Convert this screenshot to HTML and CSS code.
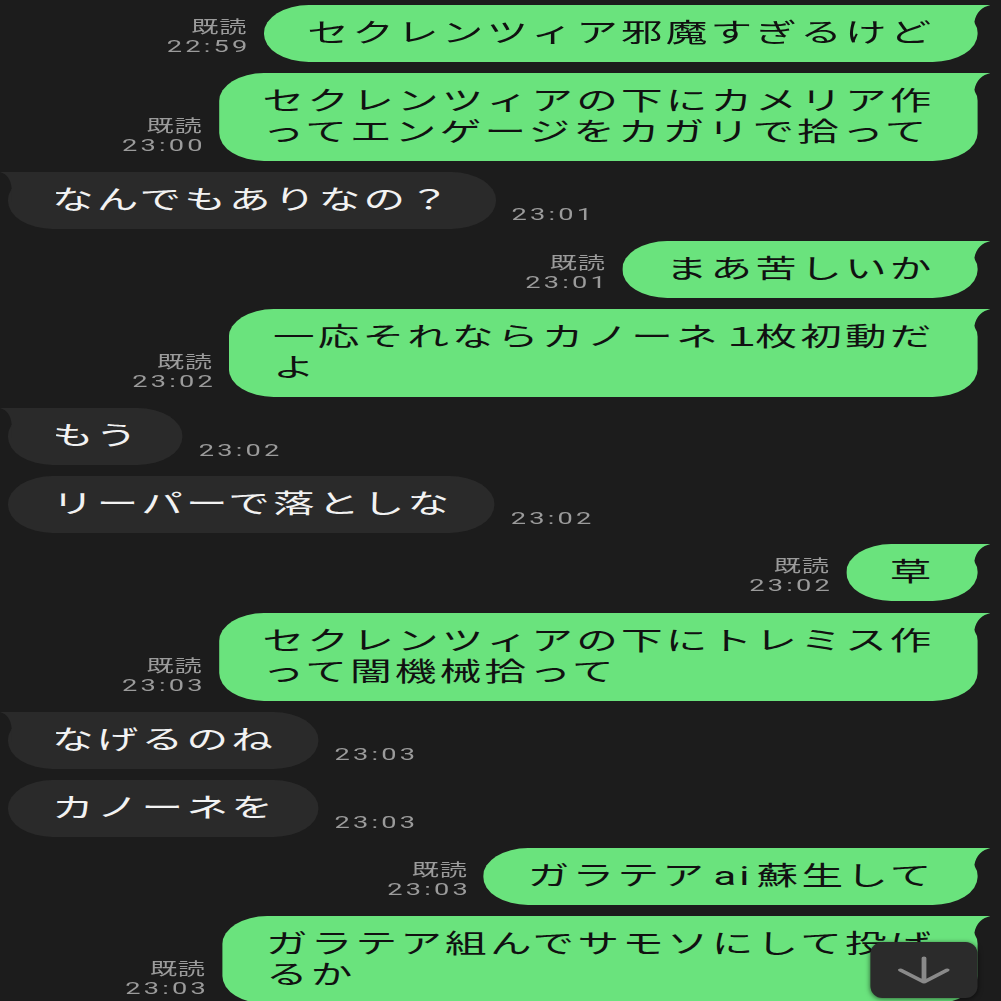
FILE: index.html
```html
<!DOCTYPE html>
<html lang="ja">
<head>
<meta charset="utf-8">
<title>LINE</title>
<link rel="stylesheet" href="styles.css">
</head>
<body>
<div class="screen">
  <div class="chat">
    <div class="row out">
      <div class="meta"><span class="read">既読</span><span class="time">22:59</span></div>
      <div class="bubble green">セクレンツィア邪魔すぎるけど<svg class="tail tail-out" viewBox="0 0 38 30" width="38" height="30"><path d="M0 0H38C33 2 29 7 28 17L28 30H0Z"/></svg></div>
    </div>
    <div class="row out">
      <div class="meta"><span class="read">既読</span><span class="time">23:00</span></div>
      <div class="bubble green">セクレンツィアの下にカメリア作<br>ってエンゲージをカガリで拾って<svg class="tail tail-out" viewBox="0 0 38 30" width="38" height="30"><path d="M0 0H38C33 2 29 7 28 17L28 30H0Z"/></svg></div>
    </div>
    <div class="row in">
      <div class="bubble gray">なんでもありなの？<svg class="tail tail-in" viewBox="0 0 35 30" width="35" height="30"><path d="M35 0H0C4 2 7 7 7.3 17L7.3 30H35Z"/></svg></div>
      <div class="meta"><span class="time">23:01</span></div>
    </div>
    <div class="row out">
      <div class="meta"><span class="read">既読</span><span class="time">23:01</span></div>
      <div class="bubble green">まあ苦しいか<svg class="tail tail-out" viewBox="0 0 38 30" width="38" height="30"><path d="M0 0H38C33 2 29 7 28 17L28 30H0Z"/></svg></div>
    </div>
    <div class="row out">
      <div class="meta"><span class="read">既読</span><span class="time">23:02</span></div>
      <div class="bubble green">一応それならカノーネ<span class="fw-num">１</span>枚初動だ<br>よ<svg class="tail tail-out" viewBox="0 0 38 30" width="38" height="30"><path d="M0 0H38C33 2 29 7 28 17L28 30H0Z"/></svg></div>
    </div>
    <div class="row in">
      <div class="bubble gray">もう<svg class="tail tail-in" viewBox="0 0 35 30" width="35" height="30"><path d="M35 0H0C4 2 7 7 7.3 17L7.3 30H35Z"/></svg></div>
      <div class="meta"><span class="time">23:02</span></div>
    </div>
    <div class="row in">
      <div class="bubble gray">リーパーで落としな</div>
      <div class="meta"><span class="time">23:02</span></div>
    </div>
    <div class="row out">
      <div class="meta"><span class="read">既読</span><span class="time">23:02</span></div>
      <div class="bubble green">草<svg class="tail tail-out" viewBox="0 0 38 30" width="38" height="30"><path d="M0 0H38C33 2 29 7 28 17L28 30H0Z"/></svg></div>
    </div>
    <div class="row out">
      <div class="meta"><span class="read">既読</span><span class="time">23:03</span></div>
      <div class="bubble green">セクレンツィアの下にトレミス作<br>って闇機械拾って<svg class="tail tail-out" viewBox="0 0 38 30" width="38" height="30"><path d="M0 0H38C33 2 29 7 28 17L28 30H0Z"/></svg></div>
    </div>
    <div class="row in">
      <div class="bubble gray">なげるのね<svg class="tail tail-in" viewBox="0 0 35 30" width="35" height="30"><path d="M35 0H0C4 2 7 7 7.3 17L7.3 30H35Z"/></svg></div>
      <div class="meta"><span class="time">23:03</span></div>
    </div>
    <div class="row in">
      <div class="bubble gray">カノーネを</div>
      <div class="meta"><span class="time">23:03</span></div>
    </div>
    <div class="row out">
      <div class="meta"><span class="read">既読</span><span class="time">23:03</span></div>
      <div class="bubble green">ガラテア<span class="latin">ai</span>蘇生して<svg class="tail tail-out" viewBox="0 0 38 30" width="38" height="30"><path d="M0 0H38C33 2 29 7 28 17L28 30H0Z"/></svg></div>
    </div>
    <div class="row out">
      <div class="meta"><span class="read">既読</span><span class="time">23:03</span></div>
      <div class="bubble green">ガラテア組んでサモソにして投げ<br>るか<svg class="tail tail-out" viewBox="0 0 38 30" width="38" height="30"><path d="M0 0H38C33 2 29 7 28 17L28 30H0Z"/></svg></div>
    </div>
  </div>
  <button class="scroll-down" type="button" aria-label="下へスクロール">
    <svg viewBox="0 0 67 56" width="67" height="56"><path d="M33.5 16V40M18.75 28L33.5 40L48 28" fill="none" stroke="#8a8a8a" stroke-width="3" stroke-linecap="round" stroke-linejoin="round"/></svg>
  </button>
</div>
</body>
</html>
```

FILE: styles.css
```css
html, body {
  margin: 0;
  padding: 0;
  background: #1c1c1c;
  overflow: hidden;
}

body {
  width: 1001px;
  height: 1001px;
}

/* the captured screen is stretched horizontally; reproduce that stretch */
.screen {
  position: relative;
  width: 625.6px;
  height: 1001px;
  overflow: hidden;
  transform: scaleX(1.6);
  transform-origin: 0 0;
  font-family: Roboto, "Noto Sans CJK JP", sans-serif;
}

.chat {
  display: flex;
  flex-direction: column;
  gap: 11.2px;
  padding: 5px 15px 0 5px;
}

.row {
  display: flex;
  align-items: flex-end;
}

.row.out {
  justify-content: flex-end;
}

.bubble {
  position: relative;
  font-size: 26px;
  line-height: 31px;
  letter-spacing: 2px;
  padding: 13px 26.5px 13px 27.5px;
  border-radius: 28px;
  white-space: nowrap;
}

.bubble.green {
  background: #6ae37d;
  color: #111;
}

.bubble.gray {
  background: #2a2a2a;
  color: #f2f2f2;
}

.fw-num {
  letter-spacing: -4.5px;
}

.latin {
  margin: 0 2.5px 0 4px;
}

.tail {
  position: absolute;
  top: 0;
  display: block;
}

.tail-out {
  right: -8px;
  fill: #6ae37d;
}

.tail-in {
  left: -5px;
  fill: #2a2a2a;
}

.meta {
  display: flex;
  flex-direction: column;
  align-items: flex-end;
  font-size: 17px;
  line-height: 19px;
  color: #9b9b9b;
  padding-bottom: 6px;
}

.row.out .meta {
  margin-right: 10px;
}

.row.in .meta {
  margin-left: 10px;
  padding-bottom: 5px;
}

.read {
  letter-spacing: 0.5px;
}

.time {
  letter-spacing: 2px;
}

.row.out .time {
  margin-right: -2px;
}

.scroll-down {
  position: absolute;
  right: 15px;
  bottom: 3px;
  width: 67px;
  height: 56px;
  padding: 0;
  border: 0;
  border-radius: 7.5px / 12px;
  background: #2b2b2b;
  box-shadow: 0 1px 4px rgba(0, 0, 0, 0.55);
  display: flex;
  align-items: center;
  justify-content: center;
}

.scroll-down svg {
  display: block;
}
```
